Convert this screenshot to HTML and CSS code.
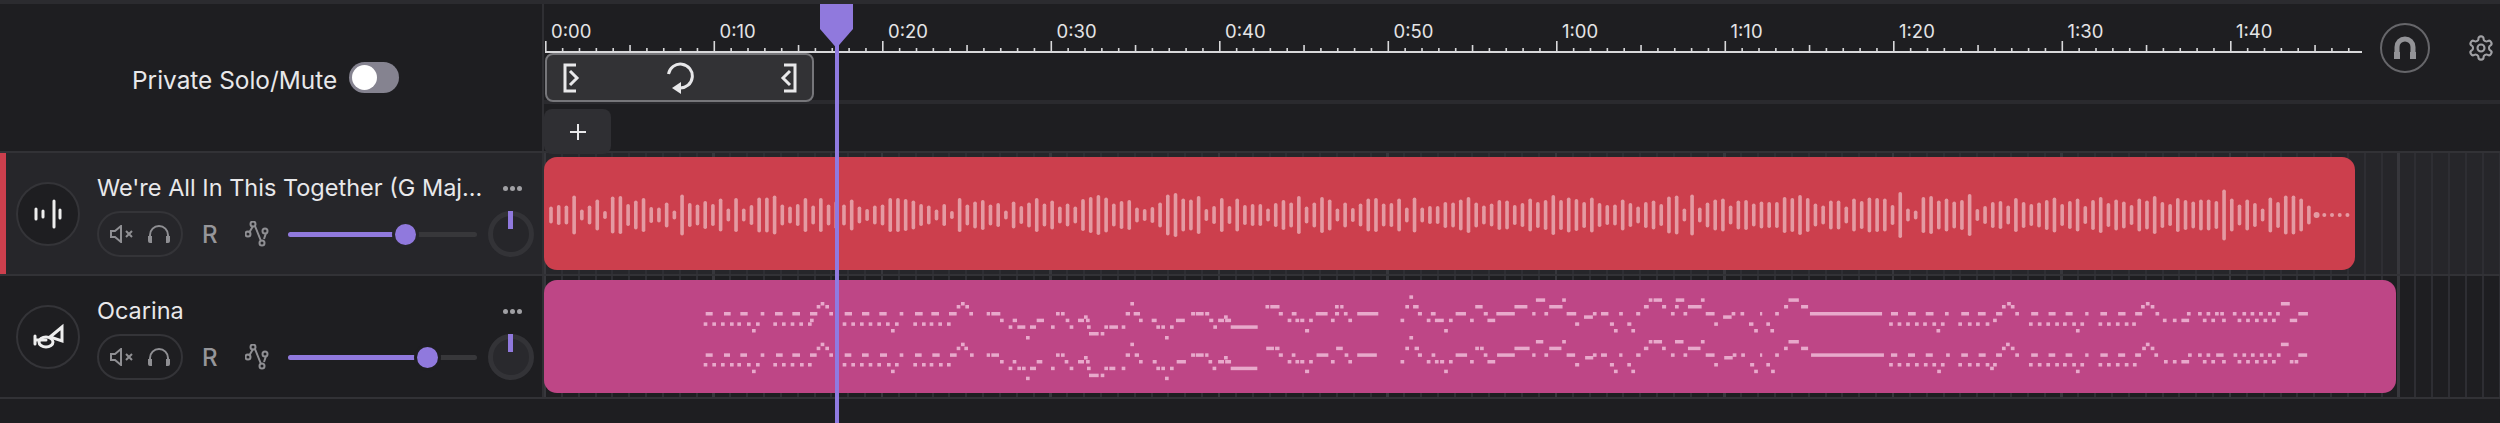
FILE: index.html
```html
<!DOCTYPE html>
<html lang="en">
<head>
  <meta charset="UTF-8">
  <title>Tracks</title>
  <link rel="stylesheet" href="styles.css">
</head>
<body>
  <div class="head">
    <div class="private">
      <span class="private-label">Private Solo/Mute</span>
      <span class="toggle"><span class="toggle-knob"></span></span>
    </div>
    <div class="timeline">
      <div class="ruler">
        <div class="ruler-main">
          <div class="labels">
            <span>0:00</span><span>0:10</span><span>0:20</span><span>0:30</span>
            <span>0:40</span><span>0:50</span><span>1:00</span><span>1:10</span>
            <span>1:20</span><span>1:30</span><span>1:40</span>
          </div>
          <svg id="ticks" class="ticks" width="1818" height="12"></svg>
          <div class="loop-bar">
            <svg class="loop-icon" width="20" height="30" viewBox="0 0 20 30">
              <path d="M14 2H3v26h11M8 8l7 7-7 7"/>
            </svg>
            <svg class="loop-icon" width="30" height="32" viewBox="0 0 30 32">
              <path d="M3.500 12a12 12 0 1 1 11 14"/>
              <path class="solid" d="M16 20v12l-9-6z"/>
            </svg>
            <svg class="loop-icon" width="20" height="30" viewBox="0 0 20 30">
              <path d="M6 2h11v26H6M12 8l-7 7 7 7"/>
            </svg>
          </div>
        </div>
        <div class="tools">
          <span class="magnet">
            <svg width="24" height="24" viewBox="0 0 24 24">
              <path class="magnet-arch" d="M4 17v-6a8 8 0 0 1 16 0v6"/>
              <path class="magnet-feet" d="M1 16h6v7H1zM17 16h6v7h-6z"/>
            </svg>
          </span>
          <svg class="gear" width="28" height="28" viewBox="0 0 24 24">
            <path d="M12.220 2h-.440a2 2 0 0 0-2 2v.180a2 2 0 0 1-1 1.730l-.430.250a2 2 0 0 1-2 0l-.150-.080a2 2 0 0 0-2.730.730l-.220.380a2 2 0 0 0 .730 2.730l.150.100a2 2 0 0 1 1 1.720v.510a2 2 0 0 1-1 1.740l-.150.090a2 2 0 0 0-.730 2.730l.220.380a2 2 0 0 0 2.730.730l.150-.080a2 2 0 0 1 2 0l.430.250a2 2 0 0 1 1 1.730V20a2 2 0 0 0 2 2h.440a2 2 0 0 0 2-2v-.180a2 2 0 0 1 1-1.730l.430-.250a2 2 0 0 1 2 0l.150.080a2 2 0 0 0 2.730-.730l.220-.390a2 2 0 0 0-.730-2.730l-.150-.080a2 2 0 0 1-1-1.740v-.500a2 2 0 0 1 1-1.740l.150-.090a2 2 0 0 0 .730-2.730l-.220-.380a2 2 0 0 0-2.730-.730l-.150.080a2 2 0 0 1-2 0l-.430-.250a2 2 0 0 1-1-1.730V4a2 2 0 0 0-2-2z"/>
            <circle cx="12" cy="12" r="3"/>
          </svg>
        </div>
      </div>
      <div class="add-row">
        <span class="add-btn">
          <svg width="20" height="20" viewBox="0 0 20 20"><path d="M10 2v16M2 10h16"/></svg>
        </span>
      </div>
    </div>
  </div>

  <div class="track track-active">
    <div class="track-head">
      <span class="track-icon">
        <svg width="36" height="32" viewBox="0 0 36 32">
          <path d="M6 11v10M13 13v6M24 3v26M30 12v8"/>
        </svg>
      </span>
      <div class="track-info">
        <div class="track-title">
          <span class="track-name">We're All In This Together (G Maj...</span>
          <span class="more"><i></i><i></i><i></i></span>
        </div>
        <div class="controls">
          <span class="pill">
            <svg class="ctl-icon" width="24" height="18" viewBox="0 0 24 18">
              <path d="M1 6v6h4l6 5V1L5 6zM16 6l6 6M22 6l-6 6"/>
            </svg>
            <svg class="ctl-icon" width="24" height="20" viewBox="0 0 24 20">
              <path d="M3 17v-6a9 9 0 0 1 18 0v6"/>
              <path class="solid" d="M1 12h4v7H3a2 2 0 0 1-2-2zM23 12h-4v7h2a2 2 0 0 0 2-2z"/>
            </svg>
          </span>
          <span class="rec">R</span>
          <svg class="ctl-icon auto" width="24" height="26" viewBox="0 0 24 26">
            <path d="M4 12l4-7M10 5l6 15M19 18l2-6"/>
            <circle cx="3" cy="13" r="2.500"/><circle cx="8" cy="3" r="2.500"/>
            <circle cx="20" cy="10" r="2.500"/><circle cx="17" cy="22" r="2.500"/>
          </svg>
          <div class="slider">
            <span class="slider-fill" style="width: 117px"></span>
            <span class="slider-thumb" style="left: 117px"></span>
          </div>
          <span class="knob"><span class="knob-needle"></span></span>
        </div>
      </div>
    </div>
    <div class="lane">
      <div class="clip clip-red"><svg id="wave" class="clip-art" width="1811" height="113"></svg></div>
    </div>
  </div>

  <div class="track">
    <div class="track-head">
      <span class="track-icon">
        <svg width="36" height="32" viewBox="0 0 36 32">
          <path d="M5 15v8M5 19h11"/>
          <ellipse cx="16" cy="21" rx="7" ry="5"/>
          <path d="M20 16L32 6v14z"/>
        </svg>
      </span>
      <div class="track-info">
        <div class="track-title">
          <span class="track-name">Ocarina</span>
          <span class="more"><i></i><i></i><i></i></span>
        </div>
        <div class="controls">
          <span class="pill">
            <svg class="ctl-icon" width="24" height="18" viewBox="0 0 24 18">
              <path d="M1 6v6h4l6 5V1L5 6zM16 6l6 6M22 6l-6 6"/>
            </svg>
            <svg class="ctl-icon" width="24" height="20" viewBox="0 0 24 20">
              <path d="M3 17v-6a9 9 0 0 1 18 0v6"/>
              <path class="solid" d="M1 12h4v7H3a2 2 0 0 1-2-2zM23 12h-4v7h2a2 2 0 0 0 2-2z"/>
            </svg>
          </span>
          <span class="rec">R</span>
          <svg class="ctl-icon auto" width="24" height="26" viewBox="0 0 24 26">
            <path d="M4 12l4-7M10 5l6 15M19 18l2-6"/>
            <circle cx="3" cy="13" r="2.500"/><circle cx="8" cy="3" r="2.500"/>
            <circle cx="20" cy="10" r="2.500"/><circle cx="17" cy="22" r="2.500"/>
          </svg>
          <div class="slider">
            <span class="slider-fill" style="width: 139px"></span>
            <span class="slider-thumb" style="left: 139px"></span>
          </div>
          <span class="knob knob-filled"><span class="knob-needle"></span></span>
        </div>
      </div>
    </div>
    <div class="lane">
      <div class="clip clip-pink"><svg id="notes" class="clip-art" width="1852" height="113"></svg></div>
    </div>
  </div>
  <div class="foot"></div>

  <div class="playhead">
    <svg width="33" height="44" viewBox="0 0 33 44"><path d="M0 0h33v25L16.500 44 0 25z"/></svg>
    <span class="playhead-line"></span>
  </div>

  <script src="script.js"></script>
</body>
</html>
```

FILE: styles.css
```css
* {
  box-sizing: border-box;
}

html, body {
  margin: 0;
  height: 423px;
  overflow: hidden;
}

body {
  position: relative;
  width: 2500px;
  background: #1e1e21;
  border-top: 4px solid #2b2b2f;
  font-family: Inter, "Noto Sans", sans-serif;
  color: #e8e8ea;
}

.head {
  display: flex;
  height: 147px;
}

.private {
  flex: 0 0 544px;
  display: flex;
  align-items: center;
  gap: 12px;
  padding-left: 132px;
  border-right: 2px solid #2f2f33;
}

.private-label {
  padding-top: 4px;
  font-size: 24.400px;
}

.toggle {
  display: flex;
  align-items: center;
  width: 50px;
  height: 31px;
  padding-left: 3px;
  border-radius: 16px;
  background: #858390;
}

.toggle-knob {
  width: 25px;
  height: 25px;
  border-radius: 50%;
  background: #fff;
}

.timeline {
  flex: 1;
  min-width: 0;
}

.ruler {
  display: flex;
  height: 96px;
}

.ruler-main {
  width: 1836px;
  padding: 17px 0 0 1px;
}

.labels {
  display: flex;
  height: 20px;
}

.labels span {
  flex: 0 0 168.500px;
  padding-left: 6px;
  font-size: 18.500px;
  line-height: 20px;
  color: #e4e4e6;
}

.ticks {
  display: block;
}

.loop-bar {
  position: relative;
  display: flex;
  align-items: center;
  justify-content: space-between;
  width: 269px;
  height: 49px;
  padding: 0 14px 0 15px;
  border: 2px solid #76767a;
  border-radius: 8px;
  background: #323235;
}

.loop-icon {
  fill: none;
  stroke: #e8e8ea;
  stroke-width: 3;
}

.loop-icon .solid {
  fill: #e8e8ea;
  stroke: none;
}

.tools {
  display: flex;
  align-items: center;
  gap: 37px;
  height: 88px;
}

.magnet {
  display: flex;
  align-items: center;
  justify-content: center;
  width: 50px;
  height: 50px;
  border: 2px solid #66666a;
  border-radius: 50%;
}

.magnet-arch {
  fill: none;
  stroke: #939397;
  stroke-width: 5;
}

.magnet-feet {
  fill: #939397;
}

.gear {
  fill: none;
  stroke: #a0a0a4;
  stroke-width: 1.800;
}

.add-row {
  height: 51px;
  padding-top: 5px;
  border-top: 4px solid #2a2a2e;
}

.add-btn {
  display: flex;
  align-items: center;
  justify-content: center;
  width: 67px;
  height: 45px;
  border-radius: 8px;
  background: #2f2f33;
}

.add-btn svg {
  fill: none;
  stroke: #e8e8ea;
  stroke-width: 2;
}

.track {
  display: flex;
  height: 123px;
  border-top: 2px solid #323236;
}

.track-active {
  background: #26262a;
}

.track-head {
  flex: 0 0 544px;
  display: flex;
  align-items: center;
  padding-left: 16px;
  border-right: 2px solid #2f2f33;
}

.track-active .track-head {
  border-left: 6px solid #cc3f4d;
  padding-left: 10px;
}

.track-icon {
  flex: 0 0 64px;
  display: flex;
  align-items: center;
  justify-content: center;
  height: 64px;
  border: 2px solid #343438;
  border-radius: 50%;
  background: #1e1e21;
}

.track-icon svg {
  fill: none;
  stroke: #eeeeee;
  stroke-width: 3;
  stroke-linecap: round;
}

.track-info {
  width: 437px;
  margin-left: 17px;
}

.track-title {
  display: flex;
  align-items: center;
  justify-content: space-between;
  height: 36px;
  padding-right: 12px;
}

.track-name {
  font-size: 23.500px;
  line-height: 30px;
  color: #e8e8ea;
}

.more {
  display: flex;
  gap: 2px;
}

.more i {
  width: 5px;
  height: 5px;
  border-radius: 50%;
  background: #a0a0a4;
}

.controls {
  display: flex;
  align-items: center;
  height: 46px;
  margin-top: 5px;
}

.pill {
  flex: 0 0 86px;
  display: flex;
  align-items: center;
  justify-content: space-between;
  height: 46px;
  padding: 0 10px 0 11px;
  border: 2px solid #343438;
  border-radius: 23px;
}

.ctl-icon {
  fill: none;
  stroke: #8f8f93;
  stroke-width: 2;
}

.ctl-icon .solid {
  fill: #8f8f93;
  stroke: none;
}

.rec {
  flex: 0 0 62px;
  padding-left: 19px;
  font-size: 24px;
  font-weight: 500;
  color: #96969a;
}

.auto {
  flex: 0 0 24px;
}

.slider {
  position: relative;
  flex: 0 0 189px;
  height: 5px;
  margin-left: 19px;
  border-radius: 3px;
  background: #37373a;
}

.slider-fill {
  position: absolute;
  left: 0;
  top: 0;
  height: 5px;
  border-radius: 3px;
  background: #9079dd;
}

.slider-thumb {
  position: absolute;
  top: -8px;
  width: 21px;
  height: 21px;
  margin-left: -10px;
  border-radius: 50%;
  background: #9079dd;
  box-shadow: 0 0 0 3px #26262a;
}

.track:not(.track-active) .slider-thumb {
  box-shadow: 0 0 0 3px #1e1e21;
}

.knob {
  position: relative;
  flex: 0 0 46px;
  height: 46px;
  margin-left: 11px;
  border: 5px solid #333337;
  border-radius: 50%;
}

.knob-filled {
  background: #29292d;
}

.knob-needle {
  position: absolute;
  left: 15px;
  top: -5px;
  width: 5px;
  height: 18px;
  background: #9079dd;
}

.lane {
  flex: 1;
  padding-top: 4px;
  background-image:
    repeating-linear-gradient(90deg, #37373c 0 2px, transparent 2px 168.500px),
    repeating-linear-gradient(90deg, #2e2e33 0 2px, transparent 2px 16.850px);
}

.clip {
  height: 113px;
  border-radius: 13px;
  overflow: hidden;
}

.clip-red {
  width: 1811px;
  background: #cc3f4d;
}

.clip-pink {
  width: 1852px;
  background: #be4686;
}

.clip-art {
  display: block;
}

.foot {
  height: 2px;
  background: #323236;
}

.playhead {
  position: absolute;
  left: 820px;
  top: 0;
  width: 33px;
  height: 419px;
}

.playhead svg {
  display: block;
  fill: #9079dd;
}

.playhead-line {
  position: absolute;
  left: 15px;
  top: 40px;
  bottom: 0;
  width: 3.500px;
  background: #8f7ae0;
}
```

FILE: script.js
```js
const SVG = 'http://www.w3.org/2000/svg'

function rect(parent, x, y, w, h, fill, rx) {
  const r = document.createElementNS(SVG, 'rect')
  r.setAttribute('x', x)
  r.setAttribute('y', y)
  r.setAttribute('width', w)
  r.setAttribute('height', h)
  r.setAttribute('fill', fill)
  if (rx) r.setAttribute('rx', rx)
  parent.appendChild(r)
}

// ruler: one tick a second, taller every 5 and 10
const ticks = document.getElementById('ticks')
for (let i = 0; i <= 108; i++) {
  const h = i % 10 == 0 ? 10 : i % 5 == 0 ? 6 : 3
  rect(ticks, i * 16.85, 10 - h, 1.6, h, '#d8d8da')
}
rect(ticks, 0, 10, 1817, 2, '#d8d8da')

// waveform heights, one per bar
const wave = [
  17,20,19,39,11,19,31,8,37,38,22,29,34,16,15,25,9,41,24,21,28,22,33,13,34,13,20,35,35,39,21,17,
  22,34,19,34,21,28,21,31,17,12,19,21,34,34,32,29,22,19,11,22,8,34,21,27,30,21,24,9,27,18,25,34,
  23,29,17,23,17,32,36,40,35,23,28,30,15,12,16,25,41,44,33,31,38,12,18,34,18,33,20,22,22,13,24,30,
  25,38,17,25,36,31,13,25,14,23,33,34,23,24,33,15,35,15,18,18,26,25,31,36,25,19,23,30,29,20,24,33,26,
  30,40,30,35,32,26,35,24,20,21,31,24,17,26,29,22,37,39,13,41,15,25,31,33,19,29,30,23,27,26,26,
  36,34,40,34,23,19,29,29,17,33,28,35,34,33,20,46,13,9,36,38,29,33,27,30,42,12,18,26,28,19,34,26,22,
  25,30,35,22,28,33,18,30,36,24,31,27,20,33,29,38,26,22,34,30,27,
  31,31,28,51,33,21,31,24,13,35,26,39,39,33,19,6,4,4,4,4
]
const waveSvg = document.getElementById('wave')
wave.forEach((h, i) => {
  const w = h < 7 ? h : 3.6
  rect(waveSvg, 551 - 544 + i * 7.71 - w / 2, 58 - h / 2, w, h, 'rgba(255,255,255,.48)', w / 2)
})

// notes, read per stretch of the clip: x origin, x scale, then "y:from-to ..." rows
const stretches = [
  [680, 3, [
    '66:422-433 843-854 1351-1362', '75:410-421 436-447 830-841 856-867',
    '96:77-98 132-152 181-203 242-253 285-308 337-360 390-412 448-459 494-516 546-568 598-620 659-670 705-728 754-777 807-830 868-879 920-930 934-961 1128-1139 1143-1154 1337-1350 1361-1380',
    '106:1212-1223',
    '116:390-401 960-971 998-1011 1070-1092 1157-1168 1194-1212 1218-1229 1377-1388 1415-1430 1488-1500',
    '127:71-82 97-108 123-134 150-161 172-183 201-212 228-239 280-291 306-317 332-343 358-369 384-395 488-499 514-525 540-551 566-577 592-603 618-629 645-656 700-711 726-737 749-760 775-786 801-812',
    '136:986-997 1012-1036 1050-1068 1113-1124 1169-1180 1221-1232 1273-1284 1288-1314 1325-1336 1429-1440 1444-1455 1470-1481',
    '147:216-227 633-644', '156:1227-1256 1262-1273', '168:1038-1049 1455-1466',
    '188:422-433 843-854 1351-1362', '200:410-421 436-447 830-841 853-864',
    '220:77-98 132-150 181-201 242-253 288-308 337-360 390-410 448-459 494-514 546-566 600-621 659-670 705-725 757-779 810-830 870-881 920-930 934-957 1128-1139 1143-1154 1337-1350 1364-1377',
    '228:1212-1223',
    '240:960-971 998-1009 1070-1087 1154-1165 1194-1212 1218-1229 1377-1388 1418-1430 1490-1500',
    '249:71-82 97-108 123-134 150-161 172-183 201-212 228-239 280-291 306-317 332-343 360-371 384-395 488-499 514-525 540-551 566-577 592-603 621-632 645-656 700-711 726-737 749-760 777-788 801-812',
    '260:986-997 1012-1023 1026-1037 1050-1068 1113-1124 1169-1180 1221-1232 1273-1284 1288-1306 1325-1336 1429-1440 1444-1455 1470-1481',
    '269:216-227 633-644', '281:1227-1256 1262-1273', '290:1038-1049 1455-1466'
  ]],
  [1180, 2.703, [
    '46:620-630', '55:962-987 1033-1043 1267-1277 1280-1303 1340-1363 1408-1418',
    '75:231-241 244-269 419-429 433-442 609-619 630-645 798-818 904-939 998-1034 1254-1267 1303-1314 1338-1348 1373-1410',
    '96:30-41 43-64 68-79 267-278 302-315 367-399 419-430 443-453 479-536 643-654 678-691 745-773 821-832 855-905 952-961 985-995 1045-1071 1116-1126 1138-1158 1187-1197 1233-1244 1327-1337 1361-1371 1421-1445 1491-1501 1515-1525',
    '106:119-129 1092-1116 1468-1491',
    '116:0-13 79-90 103-119 122-138 291-301 312-322 325-336 349-359 408-418 455-465 596-606 667-677 689-713 727-737 784-794 831-852',
    '127:1068-1079 1162-1173 1209-1220 1444-1454 1538-1550', '136:90-100 137-210',
    '147:338-349 714-724 1173-1183 1220-1230 1552-1562',
    '168:620-630', '180:962-982 1033-1043 1267-1277 1280-1303 1338-1361 1408-1418',
    '200:233-254 257-269 422-440 609-619 634-646 798-808 811-821 904-945 998-1031 1254-1266 1303-1313 1373-1407',
    '220:30-41 43-64 68-77 267-278 302-312 369-401 445-455 479-532 643-654 680-690 745-776 821-831 857-905 952-961 985-995 1045-1068 1116-1126 1138-1154 1187-1196 1233-1245 1327-1337 1361-1371 1421-1445 1494-1504 1517-1527',
    '228:119-129 1095-1117 1471-1494',
    '240:0-16 77-87 103-119 122-138 291-301 312-322 325-336 349-359 408-418 455-465 596-606 667-677 689-699 703-714 727-737 784-794 831-852',
    '249:1068-1079 1162-1173 1209-1219 1444-1454 1541-1552', '260:88-98 137-209',
    '269:338-349 714-724 1173-1183 1220-1230 1552-1562'
  ]],
  [1760, 2.703, [
    '55:77-105', '66:668-678 1043-1053 1408-1432',
    '75:65-76 111-130 654-664 678-688 1030-1040 1056-1066',
    '96:0-6 41-51 135-330 354-373 400-421 448-469 500-510 544-565 589-610 638-655 690-700 733-752 780-799 826-845 879-888 920-938 968-988 1014-1033 1069-1079 1154-1164 1184-1194 1207-1217 1230-1240 1244-1254 1278-1288 1304-1314 1326-1336 1349-1359 1373-1383 1395-1405 1455-1481',
    '116:630-640 1089-1099 1116-1126 1139-1160 1197-1207 1220-1230 1249-1259 1291-1301 1314-1324 1338-1348 1361-1371 1384-1394 1432-1452',
    '127:17-27 349-359 372-382 395-405 419-429 441-451 466-476 489-499 536-546 562-572 584-594 610-620 727-737 751-761 774-784 798-808 819-829 844-854 866-876 915-925 938-948 962-972 986-996 1006-1016',
    '147:28-38 477-487 854-864',
    '180:77-105', '188:665-675 1043-1053 1408-1429',
    '200:65-75 111-130 654-664 678-688 1033-1043 1056-1066',
    '220:0-6 41-51 138-335 354-371 400-419 448-467 503-513 544-562 591-610 638-654 690-700 733-751 780-798 826-844 879-888 920-940 968-987 1014-1030 1066-1076 1157-1167 1184-1194 1207-1217 1233-1253 1280-1290 1304-1314 1327-1337 1351-1361 1373-1383 1397-1407 1455-1479',
    '240:1092-1102 1116-1126 1139-1160 1197-1207 1220-1230 1249-1259 1291-1301 1314-1324 1338-1348 1361-1371 1384-1394 1432-1442 1445-1455',
    '249:17-27 349-359 372-382 395-405 419-429 443-453 466-476 489-499 536-546 562-572 584-594 610-620 630-640 727-737 751-761 774-784 798-808 819-829 844-854 866-876 915-925 938-948 962-972 986-996 1008-1018',
    '260:622-632', '269:30-40 479-489 854-864'
  ]]
]
const notesSvg = document.getElementById('notes')
stretches.forEach(([origin, scale, rows]) => {
  rows.forEach(row => {
    const [y, spans] = row.split(':')
    spans.split(' ').forEach(span => {
      const [a, b] = span.split('-').map(Number)
      rect(notesSvg, origin - 544 + a / scale, y / 3, (b - a) / scale, 3.5, '#e8a9cb')
    })
  })
})
```
